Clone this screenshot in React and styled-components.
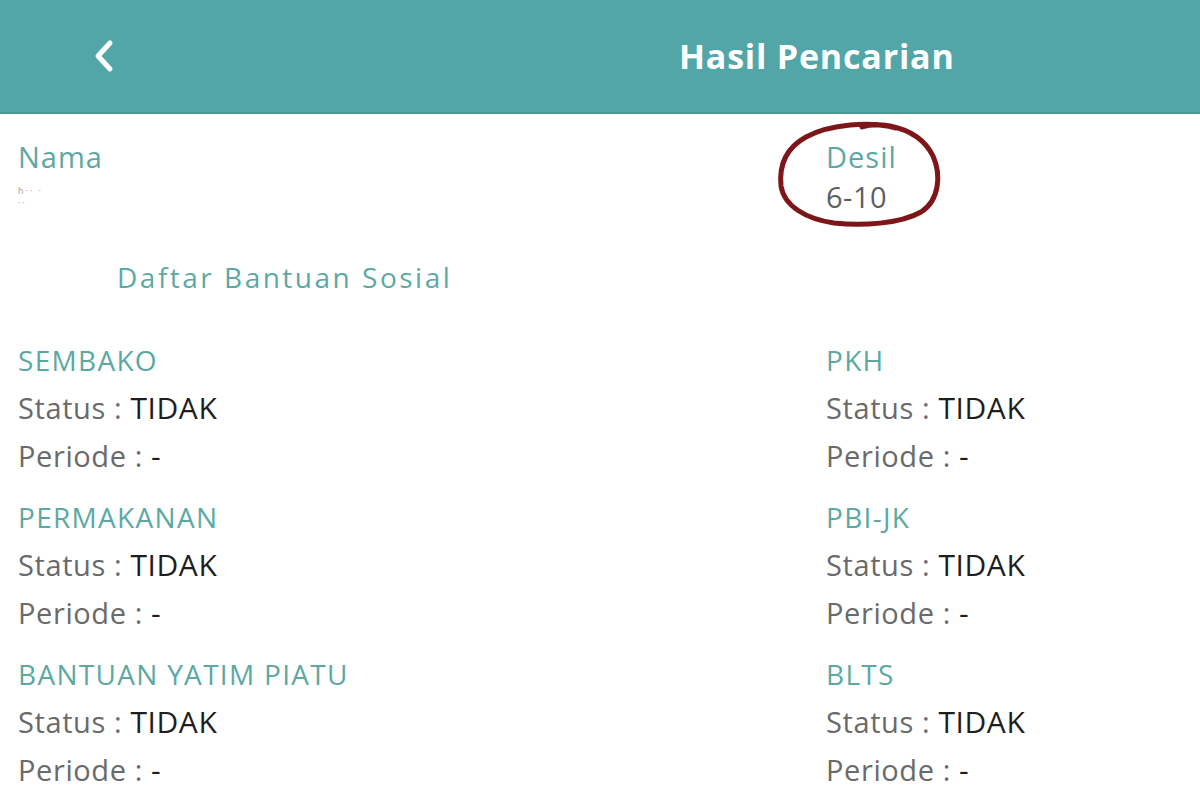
import styled, { createGlobalStyle } from 'styled-components'

const GlobalStyle = createGlobalStyle`
    body {
        margin: 0;
        background: #ffffff;
        font-family: "Open Sans", "Noto Sans", sans-serif;
    }
`

const programs = [
    { name: 'SEMBAKO', status: 'TIDAK', periode: '-' },
    { name: 'PKH', status: 'TIDAK', periode: '-' },
    { name: 'PERMAKANAN', status: 'TIDAK', periode: '-' },
    { name: 'PBI-JK', status: 'TIDAK', periode: '-' },
    { name: 'BANTUAN YATIM PIATU', status: 'TIDAK', periode: '-' },
    { name: 'BLTS', status: 'TIDAK', periode: '-' },
]

function App(){

    return(
        <Page>
            <GlobalStyle />
            <Header>
                <BackButton>
                    <svg width="22" height="34" viewBox="0 0 22 34">
                        <path d="M17 4 L5 17 L17 30" fill="none" stroke="#ffffff" strokeWidth="5" strokeLinecap="round" strokeLinejoin="round" />
                    </svg>
                </BackButton>
                <Title>Hasil Pencarian</Title>
            </Header>

            <Info>
                <Cell>
                    <Label>Nama</Label>
                    <Masked>h·· ·<br />··</Masked>
                </Cell>
                <Cell>
                    <Label>Desil</Label>
                    <Value>6-10</Value>
                    <Circle viewBox="770 118 180 112" width="180" height="112">
                        <path
                            d="M896 128 C 870 121, 830 124, 806 137 C 786 148, 779 166, 781 186 C 784 206, 806 219, 834 223 C 862 226, 900 224, 921 212 C 940 200, 941 174, 933 156 C 925 140, 910 130, 890 126 C 878 124, 868 125, 862 127"
                            fill="none"
                            stroke="#7e1518"
                            strokeWidth="5"
                            strokeLinecap="round"
                        />
                    </Circle>
                </Cell>
            </Info>

            <SectionTitle>Daftar Bantuan Sosial</SectionTitle>

            <Grid>
                {programs.map((p) => (
                    <Program key={p.name}>
                        <ProgramName>{p.name}</ProgramName>
                        <Line>Status : <strong>{p.status}</strong></Line>
                        <Line>Periode : <strong>{p.periode}</strong></Line>
                    </Program>
                ))}
            </Grid>
        </Page>
    )
}

export default App

const Page = styled.div`
    width: 1200px;
    height: 800px;
    overflow: hidden;
    background: #ffffff;
`

const Header = styled.div`
    height: 112px;
    background-color: #52a6a8;
    border-bottom: 2px solid #4a9799;
    display: flex;
    align-items: center;
    padding-left: 93px;
`

const BackButton = styled.div`
    width: 22px;
    height: 34px;
    display: flex;
`

const Title = styled.h1`
    margin: 0 0 0 564px;
    color: #ffffff;
    font-size: 34px;
    font-weight: 700;
    letter-spacing: 0.8px;
`

const Info = styled.div`
    display: grid;
    grid-template-columns: 808px 1fr;
    padding: 23px 0 0 18px;
`

const Cell = styled.div`
    position: relative;
    height: 80px;
`

const Label = styled.div`
    color: #5ca9a3;
    font-size: 29px;
    line-height: 40px;
    letter-spacing: 1px;
`

const Value = styled.div`
    color: #5f5f5f;
    font-size: 29px;
    line-height: 40px;
    letter-spacing: 0.5px;
`

const Masked = styled.div`
    color: #9a9a9a;
    font-size: 9px;
    line-height: 12px;
    padding-top: 8px;
    letter-spacing: 2px;
`

const Circle = styled.svg`
    position: absolute;
    left: -56px;
    top: -19px;
    pointer-events: none;
`

const SectionTitle = styled.h2`
    margin: 40px 0 0 117px;
    color: #5ca9a3;
    font-size: 28px;
    font-weight: 500;
    line-height: 40px;
    letter-spacing: 2.5px;
`

const Grid = styled.div`
    display: grid;
    grid-template-columns: 808px 1fr;
    row-gap: 13px;
    padding: 39px 0 0 18px;
`

const Program = styled.div`
    display: flex;
    flex-direction: column;
`

const ProgramName = styled.div`
    color: #5ca9a3;
    font-size: 28px;
    line-height: 48px;
    letter-spacing: 1.3px;
`

const Line = styled.div`
    color: #6a6a6a;
    font-size: 29px;
    line-height: 48px;
    letter-spacing: 0.6px;

    strong{
        color: #1e1e1e;
        font-weight: 400;
        font-size: 30px;
    }
`
